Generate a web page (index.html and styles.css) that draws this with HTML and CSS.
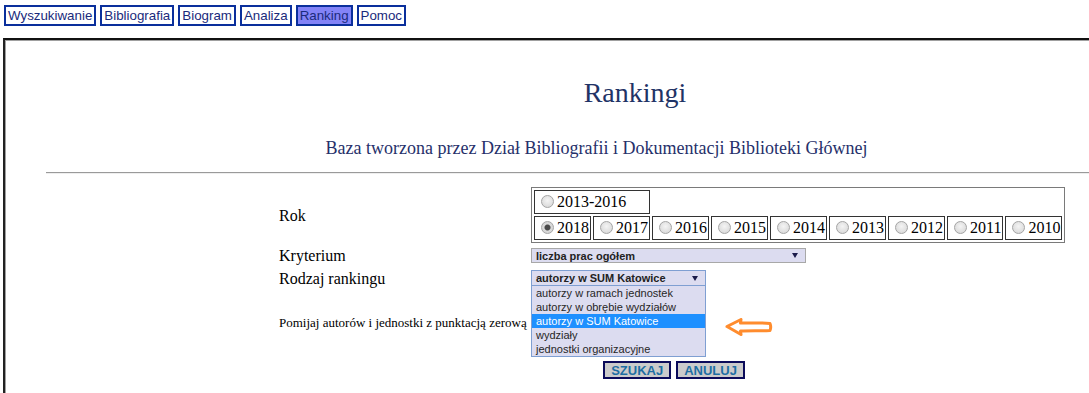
FILE: index.html
```html
<!DOCTYPE html>
<html lang="pl">
<head>
    <title>Rankingi</title>
    <meta charset="utf-8">
    <meta content="width=device-width, initial-scale=1" name="viewport" />
    <link rel="stylesheet" href="styles.css">
</head>
<body>
    <nav class="menu">
        <a class="menu-item" href="#">Wyszukiwanie</a>
        <a class="menu-item" href="#">Bibliografia</a>
        <a class="menu-item" href="#">Biogram</a>
        <a class="menu-item" href="#">Analiza</a>
        <a class="menu-item active" href="#">Ranking</a>
        <a class="menu-item" href="#">Pomoc</a>
    </nav>
    <div class="frame">
        <h1 class="title">Rankingi</h1>
        <p class="subtitle">Baza tworzona przez Dział Bibliografii i Dokumentacji Biblioteki Głównej</p>
        <hr class="rule">
        <form class="ranking-form">
            <div class="row">
                <span class="label">Rok</span>
                <table class="years">
                    <tr>
                        <td colspan="2"><input type="radio" name="rok">2013-2016</td>
                    </tr>
                    <tr>
                        <td><input type="radio" name="rok" checked>2018</td>
                        <td><input type="radio" name="rok">2017</td>
                        <td><input type="radio" name="rok">2016</td>
                        <td><input type="radio" name="rok">2015</td>
                        <td><input type="radio" name="rok">2014</td>
                        <td><input type="radio" name="rok">2013</td>
                        <td><input type="radio" name="rok">2012</td>
                        <td><input type="radio" name="rok">2011</td>
                        <td><input type="radio" name="rok">2010</td>
                    </tr>
                </table>
            </div>
            <div class="row row-criteria">
                <span class="label">Kryterium</span>
                <div class="select select-wide">
                    <span>liczba prac ogółem</span>
                    <span class="caret"></span>
                </div>
            </div>
            <div class="row row-type">
                <span class="label">Rodzaj rankingu</span>
                <div class="select select-open">
                    <span>autorzy w SUM Katowice</span>
                    <span class="caret"></span>
                    <ul class="options">
                        <li>autorzy w ramach jednostek</li>
                        <li>autorzy w obrębie wydziałów</li>
                        <li class="selected">autorzy w SUM Katowice</li>
                        <li>wydziały</li>
                        <li>jednostki organizacyjne</li>
                    </ul>
                </div>
            </div>
            <div class="row row-skip">
                <span class="label label-small">Pomijaj autorów i jednostki z punktacją zerową</span>
                <input type="checkbox" class="skip-box">
            </div>
            <div class="row row-buttons">
                <button type="button" class="btn">SZUKAJ</button>
                <button type="button" class="btn">ANULUJ</button>
            </div>
            <svg class="pointer" width="50" height="20" viewBox="0 0 50 20">
                <path d="M2 8.5 L16 1.5 L15.5 5 C25 5 35 4.5 45 5.5 C46 8 46 10 45 12.5 C35 13 25 12.5 15.5 13 L16 16.5 Z" fill="none" stroke="#ff8c2e" stroke-width="3" stroke-linejoin="round"/>
            </svg>
        </form>
    </div>
</body>
</html>
```

FILE: styles.css
```css
body {
    margin: 0;
    padding: 5px 0 0 4px;
    overflow: hidden;
    height: 393px;
    box-sizing: border-box;
    font-family: "Liberation Serif", "Times New Roman", serif;
    background: #fff;
}
.menu {
    display: flex;
    gap: 4px;
}
.menu-item {
    display: block;
    padding: 1px 2px;
    line-height: 15px;
    border: 2px solid #0a2f9c;
    color: #1a2a7c;
    background: #fff;
    text-decoration: none;
    font-family: "Liberation Sans", Arial, sans-serif;
    font-size: 13.33px;
}
.menu-item.active {
    background: #8383f7;
}
.frame {
    margin: 12px 0 0 -1px;
    width: 1300px;
    height: 400px;
    border-top: 2px solid #111;
    border-left: 2px solid #222;
    box-shadow: inset 1px 1px 0 #a0a0a0;
}
.title {
    margin: 37px 0 0;
    width: 1260px;
    text-align: center;
    font-size: 28px;
    font-weight: normal;
    line-height: 32px;
    color: #1f3366;
}
.subtitle {
    margin: 28px 0 0;
    width: 1183px;
    text-align: center;
    font-size: 18px;
    line-height: 22px;
    color: #26306a;
}
.rule {
    margin: 13px 0 0 41px;
    border: 0;
    border-top: 1px solid #9a9a9a;
    border-bottom: 1px solid #eee;
}
.ranking-form {
    position: relative;
    margin: 13px 0 0 274px;
    width: 790px;
}
.row {
    display: flex;
    align-items: center;
}
.label {
    width: 252px;
    flex: none;
    font-size: 16px;
    line-height: 15px;
}
.label-small {
    font-size: 13px;
}
.years {
    border-collapse: separate;
    border-spacing: 2px;
    border: 1px solid #7a7a7a;
}
.years td {
    padding: 1px;
    border: 1px solid #333;
    font-size: 16px;
    line-height: 20px;
    white-space: nowrap;
}
.years input {
    appearance: none;
    box-sizing: border-box;
    width: 13px;
    height: 13px;
    margin: 3px 3px 0 5px;
    border-radius: 50%;
    border: 1px solid #a4a4a4;
    background: radial-gradient(circle at 50% 40%, #f4f4f4, #d3d3d3);
    vertical-align: -1px;
}
.years input:checked {
    background: radial-gradient(circle, #4a4a4a 0 2.5px, #dadada 3.5px, #d0d0d0);
}
.row-criteria {
    margin-top: 5px;
}
.row-type {
    margin-top: 7px;
}
.row-skip {
    margin-top: 22px;
    height: 28px;
}
.skip-box {
    margin: 0;
}
.row-buttons {
    margin-top: 25px;
    justify-content: center;
    gap: 5px;
}
.select {
    display: flex;
    justify-content: space-between;
    align-items: center;
    box-sizing: border-box;
    height: 15px;
    padding: 0 7px 0 4px;
    border: 1px solid #a8a8a8;
    background: #dcdcf0;
    color: #222;
    font: bold 11px "Liberation Sans", Arial, sans-serif;
}
.select-wide {
    width: 275px;
}
.select-open {
    position: relative;
    width: 175px;
    height: 16px;
    border-color: #7f9fd2;
}
.caret {
    width: 0;
    height: 0;
    border-left: 3px solid transparent;
    border-right: 3px solid transparent;
    border-top: 5px solid #1b1b4a;
}
.options {
    position: absolute;
    top: 100%;
    left: -1px;
    z-index: 2;
    width: 175px;
    box-sizing: border-box;
    margin: 0;
    padding: 0;
    list-style: none;
    border: 1px solid #7f9fd2;
    background: #dcdcf0;
    font-weight: normal;
}
.options li {
    height: 14px;
    line-height: 14px;
    padding-left: 4px;
    color: #262626;
}
.options li.selected {
    background: #1e90ff;
    color: #fff;
}
.btn {
    height: 18px;
    padding: 0 6px;
    line-height: 14px;
    border: 2px solid #0b0b5a;
    background: #cbcbcb;
    color: #1d6ea3;
    font: bold 13px "Liberation Sans", Arial, sans-serif;
}
.pointer {
    position: absolute;
    left: 446px;
    top: 131px;
}
```
